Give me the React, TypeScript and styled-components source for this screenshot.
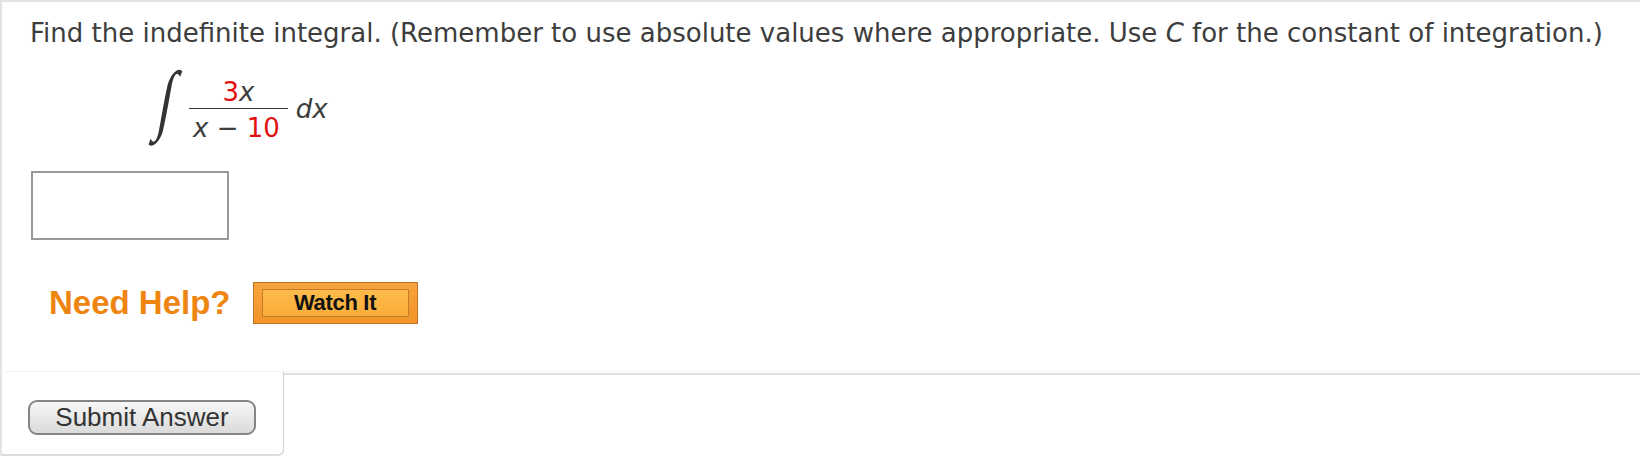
import { ReactElement } from "react";
import styled, { createGlobalStyle } from "styled-components";

const GlobalStyle = createGlobalStyle`
  html, body {
    margin: 0;
    padding: 0;
    background: #ffffff;
  }
  body {
    width: 1640px;
    height: 457px;
    overflow: hidden;
  }
`;

const Page = styled.div`
  display: flex;
  flex-direction: column;
  width: 1640px;
`;

const QuestionPanel = styled.div`
  display: flex;
  flex-direction: column;
  height: 372px;
  box-sizing: border-box;
  padding: 16px 0 0 28px;
  border-top: 2px solid #e3e3e3;
  border-left: 2px solid #e3e3e3;
  border-bottom: 1px solid #f4f4f4;
`;

const Prompt = styled.p`
  margin: 0;
  font-family: "DejaVu Sans", Verdana, sans-serif;
  font-size: 26px;
  line-height: 31px;
  color: #3d3d3d;
  white-space: nowrap;
`;

const Var = styled.i`
  font-style: italic;
`;

const Red = styled.span`
  color: #e30f0f;
`;

const MathRow = styled.div`
  display: flex;
  align-items: center;
  margin: 23px 0 0 117px;
  font-family: "DejaVu Sans", Verdana, sans-serif;
  font-size: 26px;
  color: #3d3d3d;
  height: 76px;
`;

const IntegralSign = styled.span`
  display: inline-block;
  width: 34px;
  text-align: center;
  font-family: "Liberation Serif", "Times New Roman", serif;
  font-size: 56px;
  line-height: 56px;
  color: #333;
  transform: translate(3px, -11px) scale(0.95, 1.38) skewX(-15deg);
  transform-origin: center;
`;

const Fraction = styled.span`
  display: inline-flex;
  flex-direction: column;
  align-items: center;
  margin-left: 8px;
`;

const Numerator = styled.span`
  line-height: 29px;
  padding: 0 4px 1px;
`;

const Denominator = styled.span`
  line-height: 29px;
  padding: 5px 8px 0 4px;
  border-top: 1.5px solid #333;
  white-space: pre;
`;

const Differential = styled.span`
  margin-left: 8px;
  font-style: italic;
  margin-top: -2px;
`;

const AnswerBox = styled.input`
  display: block;
  box-sizing: border-box;
  width: 198px;
  height: 69px;
  margin: 23px 0 0 1px;
  border: 2px solid #999;
  background: #fff;
  outline: none;
`;

const HelpRow = styled.div`
  display: flex;
  align-items: center;
  gap: 22px;
  margin: 42px 0 0 19px;
`;

const HelpLabel = styled.span`
  font-family: "Liberation Sans", Arial, sans-serif;
  font-weight: bold;
  font-size: 33px;
  color: #ee8510;
`;

const WatchButton = styled.button`
  display: flex;
  box-sizing: border-box;
  width: 165px;
  height: 42px;
  padding: 6px 8px;
  border: 1px solid #c27224;
  background: linear-gradient(#f7a43c, #f29428);
  cursor: pointer;
`;

const WatchInner = styled.span`
  flex: 1;
  display: flex;
  align-items: center;
  justify-content: center;
  border: 1px solid #c67b2b;
  background: linear-gradient(#fdbb4b, #f9ac3a);
  font-family: "Liberation Sans", Arial, sans-serif;
  font-weight: bold;
  font-size: 22px;
  letter-spacing: -0.3px;
  color: #111;
`;

const FooterRow = styled.div`
  display: flex;
  height: 84px;
`;

const SubmitTab = styled.div`
  box-sizing: border-box;
  width: 284px;
  height: 84px;
  padding: 28px 0 0 26px;
  border-left: 2px solid #e3e3e3;
  border-right: 1px solid #cfcfcf;
  border-bottom: 2px solid #dcdcdc;
  border-bottom-right-radius: 6px;
`;

const SubmitButton = styled.button`
  box-sizing: border-box;
  width: 228px;
  height: 35px;
  padding: 0;
  border: 2px solid #858585;
  border-radius: 9px;
  background: linear-gradient(#f7f7f7, #dadada);
  font-family: "Liberation Sans", Arial, sans-serif;
  font-size: 26px;
  color: #333;
  cursor: pointer;
`;

const FooterRest = styled.div`
  flex: 1;
  margin-top: 1px;
  border-top: 2px solid #dedede;
`;

export const App = (): ReactElement => {
  return (
    <Page>
      <GlobalStyle />
      <QuestionPanel>
        <Prompt>
          Find the indefinite integral. (Remember to use absolute values where
          appropriate. Use <Var>C</Var> for the constant of integration.)
        </Prompt>
        <MathRow>
          <IntegralSign>∫</IntegralSign>
          <Fraction>
            <Numerator>
              <Red>3</Red>
              <Var>x</Var>
            </Numerator>
            <Denominator>
              <Var>x</Var> − <Red>10</Red>
            </Denominator>
          </Fraction>
          <Differential>dx</Differential>
        </MathRow>
        <AnswerBox type="text" aria-label="answer" />
        <HelpRow>
          <HelpLabel>Need Help?</HelpLabel>
          <WatchButton>
            <WatchInner>Watch It</WatchInner>
          </WatchButton>
        </HelpRow>
      </QuestionPanel>
      <FooterRow>
        <SubmitTab>
          <SubmitButton>Submit Answer</SubmitButton>
        </SubmitTab>
        <FooterRest />
      </FooterRow>
    </Page>
  );
};

export default App;
